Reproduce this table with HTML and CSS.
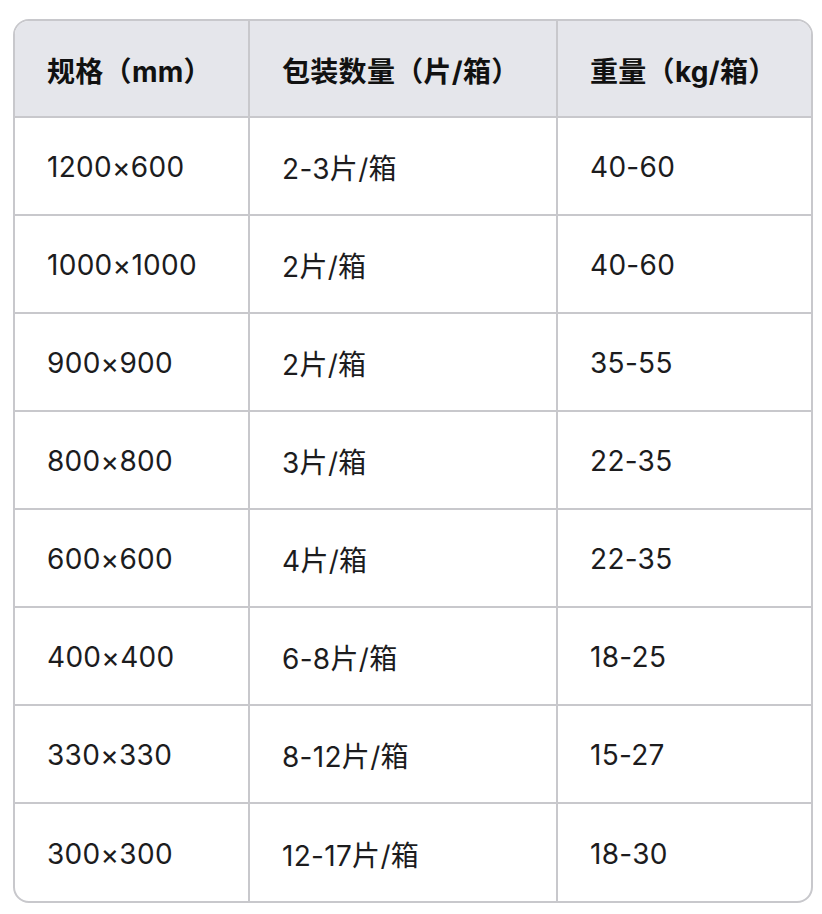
FILE: index.html
```html
<!DOCTYPE html>
<html lang="zh">
<head>
<meta charset="utf-8">
<link rel="stylesheet" href="styles.css">
</head>
<body>
<div class="wrap">
<table class="spec">
<thead>
<tr><th class="c1">规格（mm）</th><th class="c2">包装数量（片/箱）</th><th class="c3">重量（kg/箱）</th></tr>
</thead>
<tbody>
<tr><td>1200×600</td><td>2-3片/箱</td><td>40-60</td></tr>
<tr><td>1000×1000</td><td>2片/箱</td><td>40-60</td></tr>
<tr><td>900×900</td><td>2片/箱</td><td>35-55</td></tr>
<tr><td>800×800</td><td>3片/箱</td><td>22-35</td></tr>
<tr><td>600×600</td><td>4片/箱</td><td>22-35</td></tr>
<tr><td>400×400</td><td>6-8片/箱</td><td>18-25</td></tr>
<tr><td>330×330</td><td>8-12片/箱</td><td>15-27</td></tr>
<tr><td>300×300</td><td>12-17片/箱</td><td>18-30</td></tr>
</tbody>
</table>
</div>
</body>
</html>
```
FILE: styles.css
```css
html, body {
  margin: 0;
  padding: 0;
  background: #ffffff;
}
body {
  font-family: Inter, "Noto Sans CJK SC", sans-serif;
  color: #1c1c1e;
}
.wrap {
  margin: 19px 0 0 13px;
  width: 796px;
  border: 2px solid #c8c8cc;
  border-radius: 16px;
  overflow: hidden;
}
.spec {
  width: 100%;
  border-collapse: collapse;
  table-layout: fixed;
}
.spec th, .spec td {
  height: 96px;
  padding: 2px 0 0 32px;
  text-align: left;
  font-size: 28px;
  letter-spacing: 0.3px;
  border-left: 2px solid #c8c8cc;
  border-top: 2px solid #c8c8cc;
  box-sizing: border-box;
  white-space: nowrap;
}
.spec th {
  background: #e5e6eb;
  font-weight: 700;
  border-top: none;
  color: #111;
}
.spec td {
  font-weight: 400;
  height: 98px;
}
.spec th:first-child, .spec td:first-child {
  border-left: none;
}
.c1 { width: 234px; }
.c2 { width: 308px; }
.c3 { width: auto; }
```
